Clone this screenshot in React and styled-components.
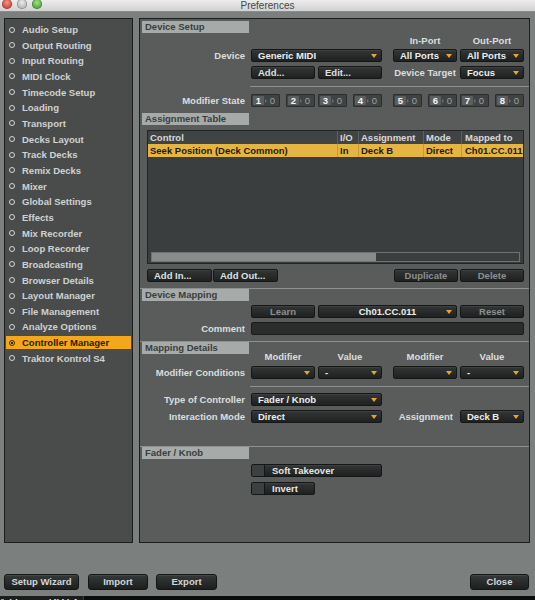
import React from 'react';
import styled, { createGlobalStyle } from 'styled-components';

const GlobalStyle = createGlobalStyle`
    * { box-sizing: border-box; }
    html, body {
        margin: 0;
        padding: 0;
        background: #7b807f;
        overflow: hidden;
    }
    body {
        font-family: "Liberation Sans", Arial, sans-serif;
    }
`;

const menu = [
    'Audio Setup', 'Output Routing', 'Input Routing', 'MIDI Clock', 'Timecode Setup',
    'Loading', 'Transport', 'Decks Layout', 'Track Decks', 'Remix Decks', 'Mixer',
    'Global Settings', 'Effects', 'Mix Recorder', 'Loop Recorder', 'Broadcasting',
    'Browser Details', 'Layout Manager', 'File Management', 'Analyze Options',
    'Controller Manager', 'Traktor Kontrol S4',
];

function Select({ children, col, center }) {
    return (
        <Drop $col={col} $center={center}>
            <span>{children}</span>
            <Arrow />
        </Drop>
    );
}

function ModGroup({ n }) {
    return (
        <Mod>
            <ModNum>{n}</ModNum>
            <ModTick />
            <ModVal>0</ModVal>
        </Mod>
    );
}

export default function App() {
    return (
        <Window>
            <GlobalStyle />
            <TitleBar>
                <Lights>
                    <Light $c="red" />
                    <Light $c="gray" />
                    <Light $c="green" />
                </Lights>
                <Title>Preferences</Title>
            </TitleBar>

            <Body>
                <Sidebar>
                    {menu.map((m) => (
                        <Item key={m} $active={m === 'Controller Manager'}>
                            <Bullet $active={m === 'Controller Manager'} />
                            {m}
                        </Item>
                    ))}
                </Sidebar>

                <Main>
                    <Header $top={2}>Device Setup</Header>
                    <Row $top={1}>
                        <Caption $col="5">In-Port</Caption>
                        <Caption $col="6">Out-Port</Caption>
                    </Row>
                    <Row $top={2}>
                        <Label>Device</Label>
                        <Select col="2 / 4">Generic MIDI</Select>
                        <Select col="5">All Ports</Select>
                        <Select col="6">All Ports</Select>
                    </Row>
                    <Row $top={4}>
                        <Button $col="2" $left>Add...</Button>
                        <Button $col="3" $left>Edit...</Button>
                        <Caption $col="5">Device Target</Caption>
                        <Select col="6">Focus</Select>
                    </Row>
                    <Line $top={7} $inset />
                    <Row $top={7}>
                        <Label>Modifier State</Label>
                        <ModPair $col="2"><ModGroup n="1" /><ModGroup n="2" /></ModPair>
                        <ModPair $col="3"><ModGroup n="3" /><ModGroup n="4" /></ModPair>
                        <ModPair $col="5"><ModGroup n="5" /><ModGroup n="6" /></ModPair>
                        <ModPair $col="6"><ModGroup n="7" /><ModGroup n="8" /></ModPair>
                    </Row>

                    <Header $top={6}>Assignment Table</Header>
                    <Table>
                        <TableHead>
                            <Cell>Control</Cell>
                            <Cell>I/O</Cell>
                            <Cell>Assignment</Cell>
                            <Cell>Mode</Cell>
                            <Cell>Mapped to</Cell>
                        </TableHead>
                        <TableRow>
                            <Cell>Seek Position (Deck Common)</Cell>
                            <Cell>In</Cell>
                            <Cell>Deck B</Cell>
                            <Cell>Direct</Cell>
                            <Cell>Ch01.CC.011</Cell>
                        </TableRow>
                        <TableBody />
                        <Scroll>
                            <Thumb style={{ width: '61%' }} />
                        </Scroll>
                    </Table>
                    <ButtonBar>
                        <Group $gap={1}>
                            <Button $w={65} $left>Add In...</Button>
                            <Button $w={65} $left>Add Out...</Button>
                        </Group>
                        <Group $gap={2}>
                            <Button $w={64} $dim>Duplicate</Button>
                            <Button $w={64} $dim>Delete</Button>
                        </Group>
                    </ButtonBar>

                    <Line $top={6} />
                    <Header>Device Mapping</Header>
                    <Row $top={4}>
                        <Button $col="2" $dim>Learn</Button>
                        <Select col="3 / 6" center>Ch01.CC.011</Select>
                        <Button $col="6" $dim>Reset</Button>
                    </Row>
                    <Row $top={4}>
                        <Label>Comment</Label>
                        <Field />
                    </Row>

                    <Line $top={6} />
                    <Header>Mapping Details</Header>
                    <Row $top={-2} $h={10}>
                        <Caption $col="2">Modifier</Caption>
                        <Caption $col="3">Value</Caption>
                        <Caption $col="5">Modifier</Caption>
                        <Caption $col="6">Value</Caption>
                    </Row>
                    <Row $top={4}>
                        <Label>Modifier Conditions</Label>
                        <Select col="2"></Select>
                        <Select col="3">-</Select>
                        <Select col="5"></Select>
                        <Select col="6">-</Select>
                    </Row>
                    <Line $top={7} $inset />
                    <Row $top={6}>
                        <Label>Type of Controller</Label>
                        <Select col="2 / 4">Fader / Knob</Select>
                    </Row>
                    <Row $top={4}>
                        <Label>Interaction Mode</Label>
                        <Select col="2 / 4">Direct</Select>
                        <Caption $col="5" $right>Assignment</Caption>
                        <Select col="6">Deck B</Select>
                    </Row>

                    <Line $top={23} />
                    <Header>Fader / Knob</Header>
                    <Row $top={5}>
                        <Toggle $col="2 / 4"><Check />Soft Takeover</Toggle>
                    </Row>
                    <Row $top={5}>
                        <Toggle $col="2"><Check />Invert</Toggle>
                    </Row>
                </Main>
            </Body>

            <Footer>
                <FootButton $w={75}>Setup Wizard</FootButton>
                <FootButton $w={60} $ml={9}>Import</FootButton>
                <FootButton $w={61} $ml={8}>Export</FootButton>
                <FootButton $w={59} $ml="auto">Close</FootButton>
            </Footer>
            <Strip>
                <Tab><Mark />House KW 1</Tab>
            </Strip>
        </Window>
    );
}

const Window = styled.div`
    width: 535px;
    height: 600px;
    display: flex;
    flex-direction: column;
    background: #7b807f;
    overflow: hidden;
`;

const TitleBar = styled.div`
    height: 12px;
    flex: none;
    display: grid;
    grid-template-columns: 1fr auto 1fr;
    background: linear-gradient(#ececec, #d2d2d2);
    border-bottom: 1px solid #8c8c8c;
    overflow: hidden;
`;

const Lights = styled.div`
    display: flex;
    gap: 5px;
    padding-left: 2px;
    margin-top: -1px;
`;

const lightColors = {
    red: 'radial-gradient(circle at 50% 35%, #f5938a, #d2423a 70%)',
    gray: 'radial-gradient(circle at 50% 35%, #ececec, #b4b4b4 70%)',
    green: 'radial-gradient(circle at 50% 35%, #a6e08f, #4aa535 70%)',
};

const Light = styled.div`
    width: 10px;
    height: 10px;
    border-radius: 50%;
    background: ${(p) => lightColors[p.$c]};
    box-shadow: inset 0 0 0 0.5px rgba(0, 0, 0, 0.35);
`;

const Title = styled.div`
    font-size: 10px;
    line-height: 12px;
    color: #454545;
`;

const Body = styled.div`
    height: 531px;
    flex: none;
    display: flex;
    gap: 6px;
    padding: 6px 5px 0 4px;
`;

const Sidebar = styled.div`
    width: 129px;
    flex: none;
    display: flex;
    flex-direction: column;
    gap: 2.67px;
    padding: 4px 1px 0;
    background: #4a4c4c;
    border: 1px solid #1c1d1d;
`;

const Item = styled.div`
    height: 13px;
    display: flex;
    align-items: center;
    gap: 7px;
    padding-left: 3px;
    font-size: 9.5px;
    font-weight: bold;
    color: ${(p) => (p.$active ? '#2a1d02' : '#cfd2d2')};
    background: ${(p) => (p.$active ? '#f2a71c' : 'transparent')};
    white-space: nowrap;
`;

const Bullet = styled.span`
    width: 6px;
    height: 6px;
    flex: none;
    border-radius: 50%;
    border: 1.6px solid ${(p) => (p.$active ? '#3a2a05' : '#d4d6d6')};
    background: ${(p) => (p.$active ? 'radial-gradient(circle, #3a2a05 35%, transparent 45%)' : 'transparent')};
`;

const Main = styled.div`
    flex: 1;
    display: flex;
    flex-direction: column;
    background: #5a5c5c;
    border: 1px solid #1c1d1d;
    font-size: 9.5px;
    font-weight: bold;
    color: #dcdede;
`;

const Header = styled.div`
    width: 107px;
    height: 12px;
    margin: ${(p) => p.$top || 0}px 0 0 2px;
    padding-left: 3px;
    background: #a6abaa;
    color: #3a3d3d;
    line-height: 12px;
`;

const Row = styled.div`
    display: grid;
    grid-template-columns: 108px 64px 64px 5px 64px 64px;
    column-gap: 3px;
    height: ${(p) => p.$h || 13}px;
    margin-top: ${(p) => p.$top || 0}px;
    line-height: ${(p) => p.$h || 13}px;
    white-space: nowrap;
`;

const Label = styled.div`
    grid-column: 1;
    text-align: right;
    padding-right: 3px;
`;

const Caption = styled.div`
    grid-column: ${(p) => p.$col};
    text-align: ${(p) => (p.$right ? 'right' : 'center')};
    padding-right: ${(p) => (p.$right ? 4 : 0)}px;
`;

const Line = styled.div`
    height: 1px;
    flex: none;
    margin: ${(p) => p.$top || 0}px 0 0 ${(p) => (p.$inset ? 110 : 0)}px;
    background: #8d9191;
`;

const control = `
    height: 13px;
    border: 1px solid #151616;
    border-radius: 2px;
    background: linear-gradient(#333636, #1f2121);
    box-shadow: inset 0 1px 0 rgba(255, 255, 255, 0.06);
`;

const Drop = styled.div`
    ${control}
    grid-column: ${(p) => p.$col};
    position: relative;
    padding: 0 14px 0 ${(p) => (p.$center ? 14 : 6)}px;
    line-height: 11px;
    color: #eceeee;
    text-align: ${(p) => (p.$center ? 'center' : 'left')};
    overflow: hidden;
`;

const Arrow = styled.i`
    position: absolute;
    right: 4px;
    top: 4px;
    width: 0;
    height: 0;
    border-left: 3px solid transparent;
    border-right: 3px solid transparent;
    border-top: 4px solid #e8a624;
`;

const Button = styled.div`
    ${control}
    grid-column: ${(p) => p.$col || 'auto'};
    width: ${(p) => (p.$w ? `${p.$w}px` : 'auto')};
    line-height: 11px;
    text-align: ${(p) => (p.$left ? 'left' : 'center')};
    padding-left: ${(p) => (p.$left ? 6 : 0)}px;
    color: ${(p) => (p.$dim ? '#8c9090' : '#dfe1e1')};
`;

const ModPair = styled.div`
    grid-column: ${(p) => p.$col};
    display: flex;
    justify-content: space-between;
`;

const Mod = styled.div`
    width: 29px;
    height: 13px;
    display: flex;
    align-items: center;
    padding: 1px;
    background: #404343;
    border: 1px solid #2c2e2e;
    border-radius: 1px;
`;

const ModNum = styled.span`
    width: 11px;
    height: 9px;
    line-height: 9px;
    text-align: center;
    background: #5c5f5f;
    color: #f4f4f4;
    border-radius: 1px;
`;

const ModTick = styled.span`
    width: 0;
    height: 0;
    margin-left: 1px;
    border-top: 2px solid transparent;
    border-bottom: 2px solid transparent;
    border-left: 2px solid #6d7070;
`;

const ModVal = styled.span`
    flex: 1;
    text-align: center;
    color: #9ea2a2;
    font-weight: normal;
    line-height: 9px;
`;

const Table = styled.div`
    height: 134px;
    margin: 5px 5px 0 7px;
    display: flex;
    flex-direction: column;
    background: #3b3e3e;
    border: 1px solid #232525;
`;

const cols = `
    display: grid;
    grid-template-columns: 189px 21px 65px 38px 1fr;
    height: 13px;
    line-height: 13px;
    white-space: nowrap;
    overflow: hidden;
`;

const TableHead = styled.div`
    ${cols}
    background: #414444;
    color: #d8dada;
    & > * + * { border-left: 1px solid #5c6060; }
`;

const TableRow = styled.div`
    ${cols}
    background: #e5b544;
    color: #1f1a0c;
    & > * + * { border-left: 1px solid #c9982e; }
`;

const Cell = styled.div`
    padding-left: 2px;
    overflow: hidden;

    &:last-child {
        padding-left: 3px;
        margin-right: -8px;
    }
`;

const TableBody = styled.div`
    flex: 1;
`;

const Scroll = styled.div`
    height: 10px;
    margin: 0 3px 1px 3px;
    border: 1px solid #6e7272;
    background: #3b3e3e;
`;

const Thumb = styled.div`
    height: 100%;
    background: #888d8c;
`;

const ButtonBar = styled.div`
    display: flex;
    justify-content: space-between;
    margin: 5px 5px 0 7px;
`;

const Group = styled.div`
    display: flex;
    gap: ${(p) => p.$gap}px;
`;

const Field = styled.div`
    grid-column: 2 / 7;
    height: 13px;
    border: 1px solid #1a1b1b;
    border-radius: 2px;
    background: #2b2d2d;
`;

const Toggle = styled.div`
    ${control}
    grid-column: ${(p) => p.$col};
    display: flex;
    align-items: center;
    gap: 7px;
    color: #e4e6e6;
    overflow: hidden;
`;

const Check = styled.span`
    width: 13px;
    height: 11px;
    flex: none;
    background: #3d4040;
    border-right: 1px solid #151616;
`;

const Footer = styled.div`
    height: 16px;
    flex: none;
    display: flex;
    margin-top: 31px;
    padding: 0 6px 0 4px;
`;

const FootButton = styled.div`
    width: ${(p) => p.$w}px;
    height: 16px;
    margin-left: ${(p) => (p.$ml === 'auto' ? 'auto' : `${p.$ml || 0}px`)};
    border: 1px solid #141515;
    border-radius: 3px;
    background: linear-gradient(#363939, #1d1f1f);
    box-shadow: inset 0 1px 0 rgba(255, 255, 255, 0.08);
    font-size: 9.5px;
    font-weight: bold;
    line-height: 14px;
    text-align: center;
    color: #d4d6d6;
`;

const Strip = styled.div`
    height: 4px;
    margin-top: 6px;
    flex: none;
    background: #0c0c0c;
    overflow: hidden;
`;

const Tab = styled.div`
    width: 84px;
    height: 20px;
    display: flex;
    gap: 5px;
    padding: 1px 0 0 1px;
    background: #1b1c1c;
    border-right: 1px solid #3a3a3a;
    color: #f2f2f2;
    font-size: 12.5px;
    line-height: 14px;
`;

const Mark = styled.span`
    width: 3px;
    height: 3px;
    margin-top: 2px;
    background: #9a9a9a;
`;
